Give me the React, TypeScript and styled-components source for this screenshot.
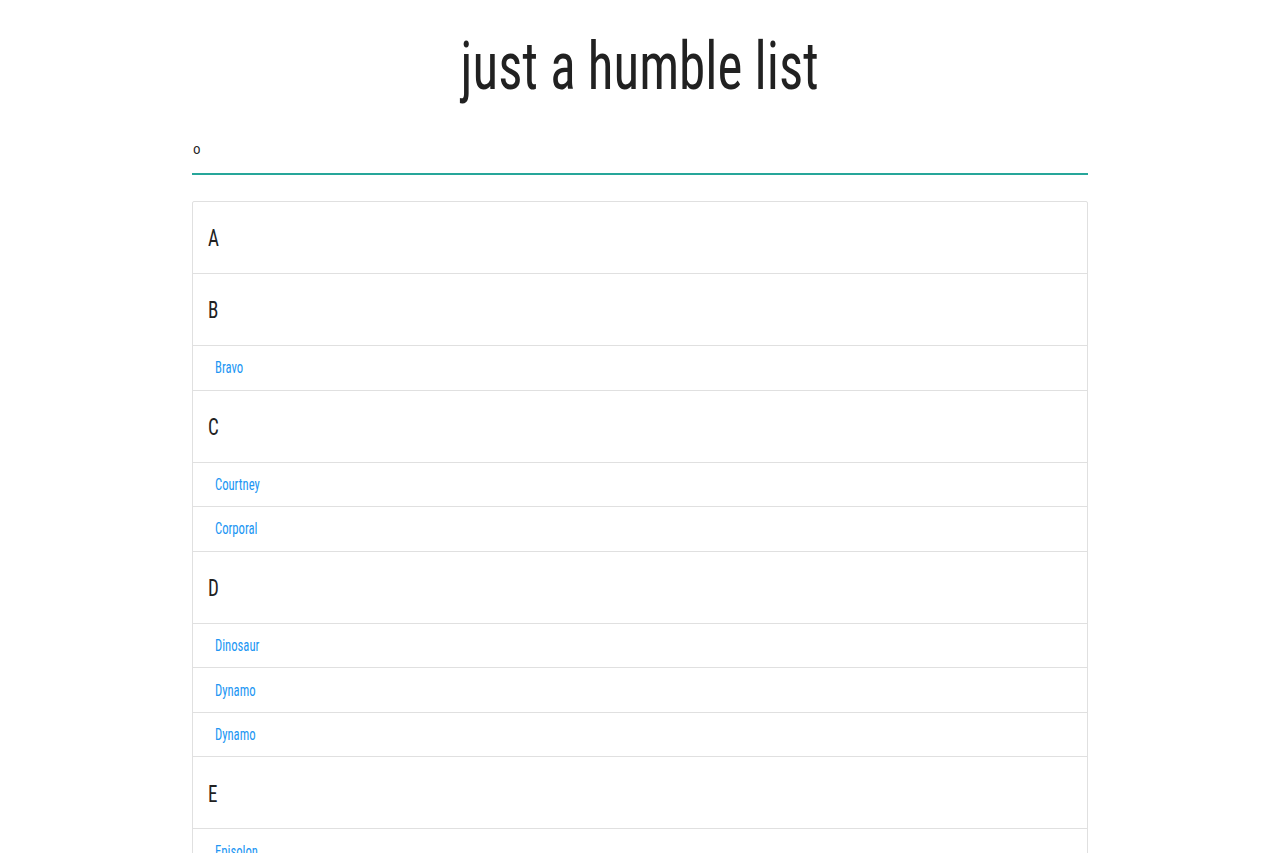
import React from "react";
import styled, { createGlobalStyle } from "styled-components";

const Global = createGlobalStyle`
  html, body { margin: 0; padding: 0; background: #fff; }
  body {
    font-family: "Roboto", "Liberation Sans", sans-serif;
    font-stretch: 75%;
    color: rgba(0,0,0,0.87);
  }
`;

const Container = styled.div`
  width: 896px;
  margin: 0 auto;
  display: flex;
  flex-direction: column;
`;

const Title = styled.h1`
  margin: 30px 0 0;
  font-size: 67.2px;
  font-weight: 400;
  line-height: 73.92px;
  text-align: center;
  font-stretch: 75%;
  color: #212121;
`;

/* glyphs in the reference are narrower than the condensed face */
const Narrow = styled.span<{ $origin?: string }>`
  display: inline-block;
  transform: scaleX(0.79);
  transform-origin: ${(p) => p.$origin ?? "left center"};
`;

const SearchInput = styled.input`
  margin: 21px 0 0;
  height: 49px;
  width: 100%;
  box-sizing: border-box;
  padding: 0 0 0 1px;
  border: none;
  border-bottom: 1px solid #26a69a;
  box-shadow: 0 1px 0 0 #26a69a;
  outline: none;
  background: transparent;
  font-family: "Roboto", "Liberation Sans", sans-serif;
  font-stretch: 75%;
  font-size: 15px;
  color: rgba(0,0,0,0.87);
`;

const Collection = styled.ul`
  margin: 27px 0 0;
  padding: 0;
  list-style: none;
  border: 1px solid #e0e0e0;
  border-radius: 2px;
`;

const Header = styled.li`
  height: 72px;
  box-sizing: border-box;
  border-bottom: 1px solid #e0e0e0;
  padding: 2px 15px 0;
  display: flex;
  align-items: center;
  font-size: 24px;
  font-stretch: 75%;
  color: #212121;
`;

const Item = styled.li`
  height: 44.6px;
  box-sizing: border-box;
  border-bottom: 1px solid #e0e0e0;
  padding: 0 22px;
  display: flex;
  align-items: center;
`;

const ItemLink = styled.a`
  color: #2196f3;
  text-decoration: none;
  font-size: 16px;
  font-stretch: 75%;
`;

const data: [string, string[]][] = [
  ["A", []],
  ["B", ["Bravo"]],
  ["C", ["Courtney", "Corporal"]],
  ["D", ["Dinosaur", "Dynamo", "Dynamo"]],
  ["E", ["Episolon"]],
];

export default function App() {
  return (
    <>
      <Global />
      <Container>
        <Title>
          <Narrow $origin="center center">just a humble list</Narrow>
        </Title>
        <SearchInput defaultValue="o" />
        <Collection>
          {data.map(([letter, items]) => (
            <React.Fragment key={letter}>
              <Header>
                <Narrow>{letter}</Narrow>
              </Header>
              {items.map((it, i) => (
                <Item key={i}>
                  <ItemLink href="#">
                    <Narrow>{it}</Narrow>
                  </ItemLink>
                </Item>
              ))}
            </React.Fragment>
          ))}
        </Collection>
      </Container>
    </>
  );
}
